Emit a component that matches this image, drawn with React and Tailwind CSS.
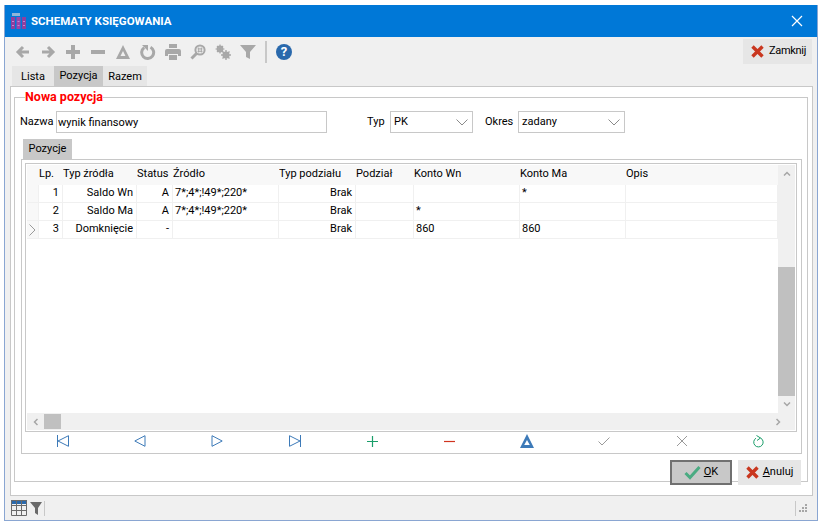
const font = { fontFamily: 'Roboto, sans-serif' };

const columns = ["", "Lp.", "Typ źródła", "Status", "Źródło", "Typ podziału", "Podział", "Konto Wn", "Konto Ma", "Opis"];

const rows = [
  { lp: 1, typ: "Saldo Wn", status: "A", zrodlo: "7*;4*;!49*;220*", podzial: "Brak", wn: "", ma: "*" },
  { lp: 2, typ: "Saldo Ma", status: "A", zrodlo: "7*;4*;!49*;220*", podzial: "Brak", wn: "*", ma: "" },
  { lp: 3, typ: "Domknięcie", status: "-", zrodlo: "", podzial: "Brak", wn: "860", ma: "860", current: true },
];

const gridCols = "grid grid-cols-[12px_24px_74px_36px_106px_77px_58px_106px_106px_152px]";

function Ico({ children, w = 16, h = 16, fill = "none", stroke = "#a8a8a8", sw = 3 }) {
  return (
    <svg width={w} height={h} viewBox={`0 0 ${w} ${h}`} fill={fill} stroke={stroke} strokeWidth={sw} className="block">
      {children}
    </svg>
  );
}

function ToolIcon({ children }) {
  return <div className="flex w-[25px] justify-center">{children}</div>;
}

function AppLogo() {
  return (
    <svg width="16" height="16" viewBox="0 0 16 16" className="block">
      <rect x="1" y="0" width="8" height="3" fill="#8fb4d8" />
      <rect x="0" y="4" width="4" height="12" fill="#8e3f9f" />
      <rect x="5.5" y="4" width="4" height="12" fill="#9a45ab" />
      <rect x="11" y="4" width="4" height="12" fill="#8e3f9f" />
      <rect x="1" y="8" width="2" height="1" fill="#c48ad0" />
      <rect x="1" y="12" width="2" height="1" fill="#c48ad0" />
      <rect x="6.5" y="8" width="2" height="1" fill="#c48ad0" />
      <rect x="6.5" y="12" width="2" height="1" fill="#c48ad0" />
      <rect x="12" y="8" width="2" height="1" fill="#c48ad0" />
      <rect x="12" y="12" width="2" height="1" fill="#c48ad0" />
    </svg>
  );
}

function Toolbar() {
  return (
    <div className="flex h-[29px] items-center pl-[5px] pr-[5px]">
      <ToolIcon>
        <Ico sw={3}><path d="M14 8H4M8 3 3 8l5 5" /></Ico>
      </ToolIcon>
      <ToolIcon>
        <Ico sw={3}><path d="M2 8h10M8 3l5 5-5 5" /></Ico>
      </ToolIcon>
      <ToolIcon>
        <Ico sw={4}><path d="M8 1v14M1 8h14" /></Ico>
      </ToolIcon>
      <ToolIcon>
        <Ico sw={4}><path d="M1 8h14" /></Ico>
      </ToolIcon>
      <ToolIcon>
        <Ico sw={0} fill="#a8a8a8"><path fillRule="evenodd" d="M8 1 15 15H1ZM8 7 5.5 12h5Z" /></Ico>
      </ToolIcon>
      <ToolIcon>
        <Ico sw={3}>
          <path d="M10.5 3.2A6 6 0 1 1 4.2 3.6" />
          <path d="M2 1h6v6Z" fill="#a8a8a8" stroke="none" />
        </Ico>
      </ToolIcon>
      <ToolIcon>
        <Ico sw={0} fill="#a8a8a8">
          <path d="M4 0h8v4H4ZM2 5h12q2 0 2 2v5h-3v-2H3v2H0V7q0-2 2-2Z" />
          <path d="M4 11h8v5H4Z" />
        </Ico>
      </ToolIcon>
      <ToolIcon>
        <Ico sw={2}>
          <circle cx="10" cy="6" r="4.6" />
          <path d="M6.5 9.5 1.5 14.5" strokeWidth="3" />
          <path d="M8.7 3.5v5M11.3 3.5v5M7.5 4.9h5M7.5 7.3h5" strokeWidth="1" />
        </Ico>
      </ToolIcon>
      <ToolIcon>
        <Ico sw={2}>
          <circle cx="5" cy="5" r="2.4" />
          <path d="M5 0.5v9M0.5 5h9M2 2l6 6M8 2l-6 6" strokeWidth="1.2" />
          <circle cx="11" cy="11" r="2.6" />
          <path d="M11 6v10M6 11h10M7.5 7.5l7 7M14.5 7.5l-7 7" strokeWidth="1.4" />
        </Ico>
      </ToolIcon>
      <ToolIcon>
        <Ico sw={0} fill="#a8a8a8"><path d="M0 1h16L10 8v7L6 13V8Z" /></Ico>
      </ToolIcon>
      <div className="ml-[5px] h-[22px] w-[2px] bg-[#c8c8c8]" />
      <div className="ml-[9px] flex h-[16px] w-[16px] items-center justify-center rounded-full bg-[#2a69ac] text-[13px] font-bold leading-none text-white">
        ?
      </div>
      <button className="ml-auto flex h-[25px] w-[69px] items-center gap-[5px] bg-[#e6e6e6] pl-[8px] text-[11px] tracking-[-0.3px] text-black">
        <RedX />
        Zamknij
      </button>
    </div>
  );
}

function RedX() {
  return (
    <Ico w={13} h={13} stroke="#c9371f" sw={3.4}>
      <path d="M1.5 1.5 11.5 11.5M11.5 1.5 1.5 11.5" />
    </Ico>
  );
}

function Tabs() {
  return (
    <div className="flex h-[20px] pl-[7px] text-[11px] text-black">
      <div className="flex w-[42px] items-center justify-center bg-[#e6e6e6] pt-[2px]">Lista</div>
      <div className="flex w-[49px] items-center justify-center bg-[#c8c8c8]">Pozycja</div>
      <div className="flex w-[44px] items-center justify-center bg-[#e6e6e6] pt-[2px]">Razem</div>
    </div>
  );
}

function Select({ value, width }) {
  return (
    <div className={`flex h-[22px] items-center justify-between border border-[#c8c8c8] bg-white pl-[3px] pr-[4px] text-[11px] ${width}`}>
      {value}
      <svg width="12" height="7" viewBox="0 0 12 7" fill="none" stroke="#8a8a8a" className="block">
        <path d="M0.5 0.5 6 6l5.5-5.5" />
      </svg>
    </div>
  );
}

function HeaderCell({ text }) {
  return <div className="truncate text-[11px] leading-[18px]">{text}</div>;
}

function Cell({ children, right }) {
  return (
    <div className={`truncate border-b border-r border-[#f0f0f0] text-[11px] leading-[16px] ${right ? "pr-[3px] text-right" : "pl-[2px]"}`}>
      {children}
    </div>
  );
}

function Grid() {
  return (
    <div className="ml-[3px] mr-[4px] mt-[3px] flex h-[269px] flex-col border border-[#c8c8c8] p-[1px]">
      <div className="flex min-h-0 flex-1">
        <div className="w-[751px] overflow-hidden">
          <div className={`${gridCols} h-[20px] bg-[#f8f8f8]`}>
            {columns.map((c, i) => (
              <HeaderCell key={i} text={c} />
            ))}
          </div>
          {rows.map((r) => (
            <div key={r.lp} className={`${gridCols} h-[18px]`}>
              <div className="flex items-center justify-center border-b border-r border-[#f0f0f0] bg-[#f8f8f8]">
                {r.current && (
                  <svg width="7" height="12" viewBox="0 0 7 12" fill="none" stroke="#9a9a9a" className="block">
                    <path d="M0.5 0.5 6 6 0.5 11.5" />
                  </svg>
                )}
              </div>
              <Cell right>{r.lp}</Cell>
              <Cell right>{r.typ}</Cell>
              <Cell right>{r.status}</Cell>
              <Cell>{r.zrodlo}</Cell>
              <Cell right>{r.podzial}</Cell>
              <Cell />
              <Cell>{r.wn}</Cell>
              <Cell>{r.ma}</Cell>
              <Cell />
            </div>
          ))}
        </div>
        <div className="flex w-[17px] flex-col bg-[#f0f0f0]">
          <div className="flex h-[17px] items-center justify-center">
            <svg width="8" height="5" viewBox="0 0 8 5" fill="none" stroke="#a6a6a6" strokeWidth="1.5" className="block">
              <path d="M1 4.5 4 1.5l3 3" />
            </svg>
          </div>
          <div className="flex-1" />
          <div className="h-[129px] bg-[#c0c0c0]" />
          <div className="flex h-[17px] items-center justify-center">
            <svg width="8" height="5" viewBox="0 0 8 5" fill="none" stroke="#a6a6a6" strokeWidth="1.5" className="block">
              <path d="M1 .5 4 3.5l3-3" />
            </svg>
          </div>
        </div>
      </div>
      <div className="flex h-[17px] items-center bg-[#f0f0f0]">
        <div className="flex w-[17px] justify-center">
          <svg width="5" height="8" viewBox="0 0 5 8" fill="none" stroke="#a6a6a6" strokeWidth="1.5" className="block">
            <path d="M4.5 1 1.5 4l3 3" />
          </svg>
        </div>
        <div className="h-[15px] w-[17px] bg-[#c0c0c0]" />
        <div className="flex-1" />
        <div className="flex w-[34px] justify-center">
          <svg width="5" height="8" viewBox="0 0 5 8" fill="none" stroke="#a6a6a6" strokeWidth="1.5" className="block">
            <path d="M.5 1 3.5 4l-3 3" />
          </svg>
        </div>
      </div>
    </div>
  );
}

function NavBtn({ children }) {
  return <div className="flex justify-center">{children}</div>;
}

function Nav() {
  const blue = "#3d7ab8";
  const green = "#1a9e6a";
  return (
    <div className="grid h-[21px] grid-cols-10 items-center pb-[3px] pl-[2px] pr-[3px]">
      <NavBtn><Ico w={12} h={12} stroke={blue} sw={1}><path d="M.5 0v12M11.5.7v10.6L1 6Z" /></Ico></NavBtn>
      <NavBtn><Ico w={12} h={12} stroke={blue} sw={1}><path d="M11 .7v10.6L.8 6Z" /></Ico></NavBtn>
      <NavBtn><Ico w={12} h={12} stroke={blue} sw={1}><path d="M1 .7v10.6L11.2 6Z" /></Ico></NavBtn>
      <NavBtn><Ico w={12} h={12} stroke={blue} sw={1}><path d="M11.5 0v12M.5.7v10.6L11 6Z" /></Ico></NavBtn>
      <NavBtn><Ico w={13} h={13} stroke={green} sw={1.2}><path d="M6.5 1v11M1 6.5h11" /></Ico></NavBtn>
      <NavBtn><Ico w={13} h={13} stroke="#d0341f" sw={1.2}><path d="M1 6.5h11" /></Ico></NavBtn>
      <NavBtn><Ico w={14} h={14} fill={blue} stroke="none" sw={0}><path fillRule="evenodd" d="M7 0 14 14H0ZM7 6 4.2 11h5.6Z" /></Ico></NavBtn>
      <NavBtn><Ico w={12} h={12} stroke="#9a9a9a" sw={1}><path d="M.5 6.5 4 10 11.5 2.5" /></Ico></NavBtn>
      <NavBtn><Ico w={12} h={12} stroke="#9a9a9a" sw={1}><path d="M1 1 11 11M11 1 1 11" /></Ico></NavBtn>
      <NavBtn>
        <Ico w={12} h={13} stroke={green} sw={1}>
          <path d="M7.5 3A4.7 4.7 0 1 1 3 3.2" />
          <path d="M3.5 0.5 7.5 3 4 5.5" />
        </Ico>
      </NavBtn>
    </div>
  );
}

function Form() {
  return (
    <fieldset className="ml-[3px] mr-[4px] mt-[3px] h-[392px] border border-[#c8c8c8] pt-[7px]">
      <legend className="ml-[10px] text-[12.5px] font-bold leading-[14px] text-[#ff0000]">Nowa pozycja</legend>
      <div className="flex h-[22px] items-center text-[11px] text-black">
        <span className="ml-[5px] w-[36px]">Nazwa</span>
        <input
          readOnly
          value="wynik finansowy"
          style={font}
          className="h-[22px] w-[271px] border border-[#c8c8c8] pl-[1px] text-[11px] outline-none"
        />
        <span className="ml-[40px] w-[23px]">Typ</span>
        <Select value="PK" width="w-[83px]" />
        <span className="ml-[12px] w-[33px]">Okres</span>
        <Select value="zadany" width="w-[107px]" />
      </div>
      <div className="ml-[8px] mt-[6px] flex h-[20px] w-[49px] items-center justify-center bg-[#c8c8c8] text-[11px]">Pozycje</div>
      <div className="ml-[6px] mr-[5px] h-[295px] border border-[#c8c8c8]">
        <Grid />
        <Nav />
      </div>
      <div className="mr-[6px] mt-[6px] flex justify-end gap-[6px] text-[11px]">
        <button className="flex h-[25px] w-[62px] items-center justify-center gap-[3px] border-2 border-[#707070] bg-[#c8c8c8]">
          <Ico w={17} h={15} stroke="#4aab82" sw={3}><path d="M1.5 8 6 12.5 15.5 2" /></Ico>
          <span><u>O</u>K</span>
        </button>
        <button className="flex h-[25px] w-[63px] items-center justify-center gap-[4px] bg-[#e6e6e6]">
          <RedX />
          <span><u>A</u>nuluj</span>
        </button>
      </div>
    </fieldset>
  );
}

function StatusBar() {
  return (
    <div className="flex h-[24px] items-center pl-[6px] pr-[9px]">
      <svg width="16" height="16" viewBox="0 0 16 16" className="block">
        <rect x="0" y="0" width="16" height="4" fill="#2a69ac" />
        <path d="M.5.5h15v15H.5ZM.5 5.5h15M.5 10.5h15M5.5.5v15M10.5.5v15" fill="none" stroke="#6a6a6a" />
      </svg>
      <svg width="13" height="13" viewBox="0 0 13 13" className="ml-[3px] block" fill="#6a6a6a">
        <path d="M0 0h12L8 6v7L5 11V6Z" />
      </svg>
      <div className="ml-[1px] h-[15px] w-[1px] bg-[#c8c8c8]" />
      <div className="ml-auto h-[15px] w-[1px] bg-[#c8c8c8]" />
      <svg width="9" height="9" viewBox="0 0 9 9" className="ml-[3px] block" fill="#a6a6a6">
        <path d="M6 0h2v2H6ZM3 3h2v2H3ZM6 3h2v2H6ZM0 6h2v2H0ZM3 6h2v2H3ZM6 6h2v2H6Z" />
      </svg>
    </div>
  );
}

export default function App() {
  return (
    <div className="h-[526px] w-[821px] overflow-hidden bg-white pl-[4px] pt-[5px] text-black" style={font}>
      <div className="flex h-[516px] w-[814px] flex-col border-x border-b border-[#8aa6d2] bg-[#f0f0f0]">
        <div className="flex h-[32px] items-center bg-[#0078d7] pl-[6px] pr-[14px] text-white">
          <AppLogo />
          <span className="ml-[4px] pt-[1px] text-[11.5px] font-bold">SCHEMATY KSIĘGOWANIA</span>
          <svg width="12" height="12" viewBox="0 0 12 12" fill="none" stroke="white" strokeWidth="1.2" className="ml-auto block">
            <path d="M1 1 11 11M11 1 1 11" />
          </svg>
        </div>
        <Toolbar />
        <Tabs />
        <div className="ml-[5px] h-[410px] w-[803px] border border-[#c8c8c8] bg-white">
          <Form />
        </div>
        <StatusBar />
      </div>
    </div>
  );
}
